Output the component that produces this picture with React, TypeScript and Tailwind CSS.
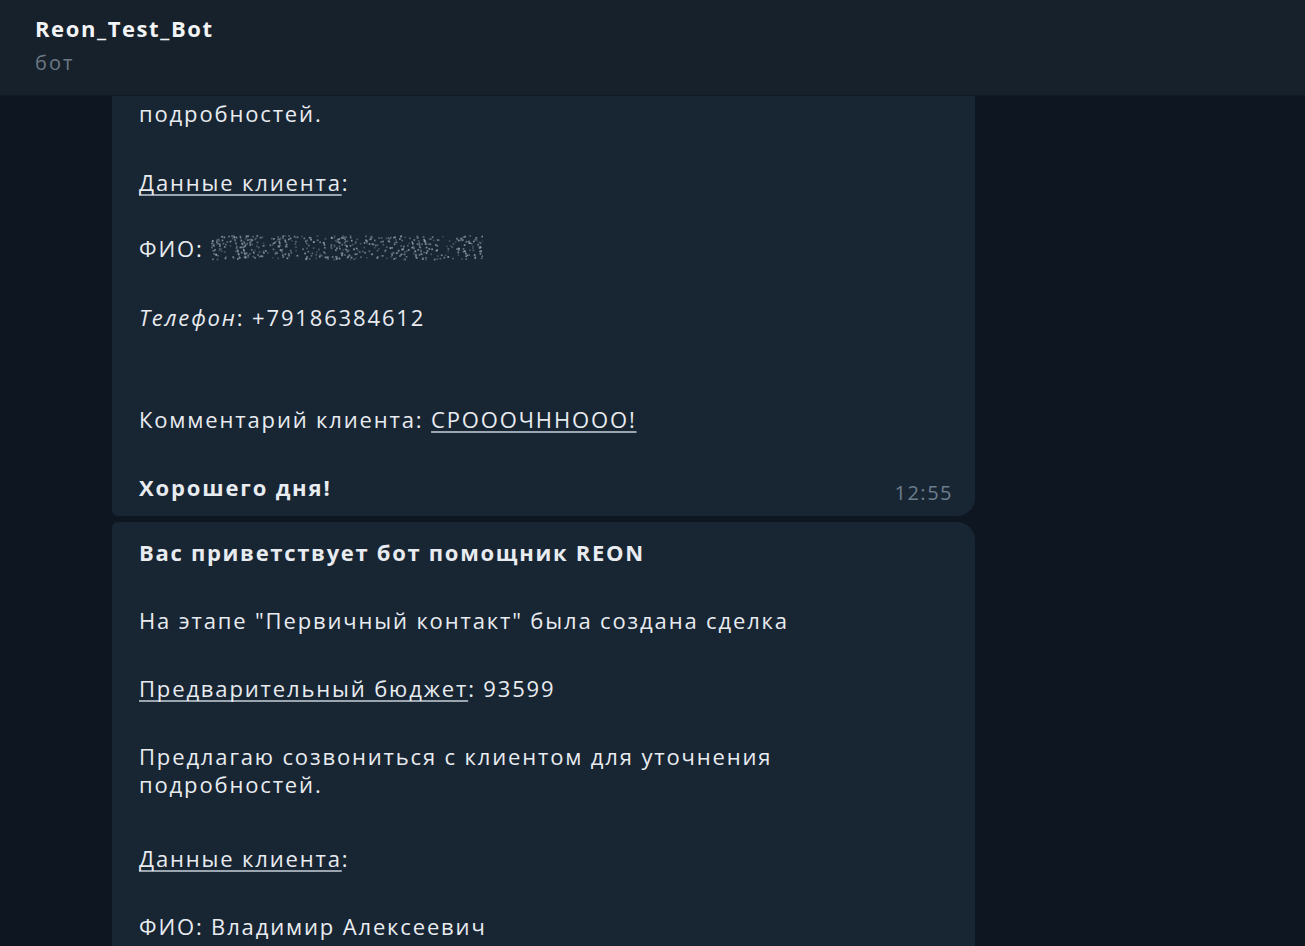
import React from "react";

const font = { fontFamily: '"Open Sans", "Noto Sans", sans-serif' };

// spoiler dots, generated once
const Spoiler = () => {
  const dots: { x: number; y: number; o: number }[] = [];
  let s = 7;
  const rnd = () => {
    s = (s * 9301 + 49297) % 233280;
    return s / 233280;
  };
  for (let i = 0; i < 560; i++) {
    dots.push({ x: rnd() * 272, y: 4 + rnd() * 24, o: 0.25 + rnd() * 0.6 });
  }
  return (
    <svg width="272" height="30" className="inline-block align-middle -mt-1">
      {dots.map((d, i) => (
        <rect key={i} x={d.x} y={d.y} width="1.7" height="1.7" fill="#9aa6b2" opacity={d.o} />
      ))}
    </svg>
  );
};

const U = ({ children }: { children: React.ReactNode }) => (
  <span className="underline decoration-[1.5px] decoration-[#9aa5b0] underline-offset-[3px] [text-decoration-skip-ink:none]">
    {children}
  </span>
);

export default function App() {
  return (
    <div
      className="h-[946px] w-full overflow-hidden flex flex-col bg-[#0e1621] text-[#e8ecf0]"
      style={font}
    >
      <div className="h-[96px] shrink-0 bg-[#17212b] border-b border-[#111a23] pl-[35px] pt-[12px] z-10">
        <div className="text-[22px] leading-[32px] font-bold text-[#f2f4f6] tracking-[1.6px]">
          Reon_Test_Bot
        </div>
        <div className="text-[20px] leading-[30px] mt-[4px] text-[#6b7884] tracking-[2px]">бот</div>
      </div>

      <div className="flex-1 overflow-hidden">
        <div className="ml-[112px] w-[863px] flex flex-col gap-[6px] text-[22px] leading-[28px] font-medium tracking-[1.85px]">
          <div className="bg-[#182533] rounded-br-[18px] rounded-bl-[6px] pl-[27px] pr-[22px] pt-[3px] pb-[15px]">
            <p>подробностей.</p>
            <p className="mt-[41px]">
              <U>Данные клиента</U>:
            </p>
            <p className="mt-[38px] flex items-center">
              ФИО:&nbsp;<Spoiler />
            </p>
            <p className="mt-[41px]">
              <i>Телефон</i>: +79186384612
            </p>
            <p className="mt-[74px]">
              Комментарий клиента: <U>СРОООЧНHOOO!</U>
            </p>
            <div className="mt-[40px] flex items-end justify-between">
              <p className="font-bold">Хорошего дня!</p>
              <span className="text-[20px] leading-[24px] font-normal text-[#6c7d8c] -mb-[4px] tracking-[1.5px]">
                12:55
              </span>
            </div>
          </div>

          <div className="bg-[#182533] rounded-tr-[18px] rounded-tl-[6px] pl-[27px] pr-[22px] pt-[16px] pb-[40px]">
            <p className="font-bold tracking-[1.7px]">Вас приветствует бот помощник REON</p>
            <p className="mt-[40px]">
              На этапе "Первичный контакт" была создана сделка
            </p>
            <p className="mt-[40px]">
              <U>Предварительный бюджет</U>: 93599
            </p>
            <p className="mt-[40px] w-[700px]">
              Предлагаю созвониться с клиентом для уточнения подробностей.
            </p>
            <p className="mt-[46px]">
              <U>Данные клиента</U>:
            </p>
            <p className="mt-[40px]">ФИО: Владимир Алексеевич</p>
          </div>
        </div>
      </div>
    </div>
  );
}
